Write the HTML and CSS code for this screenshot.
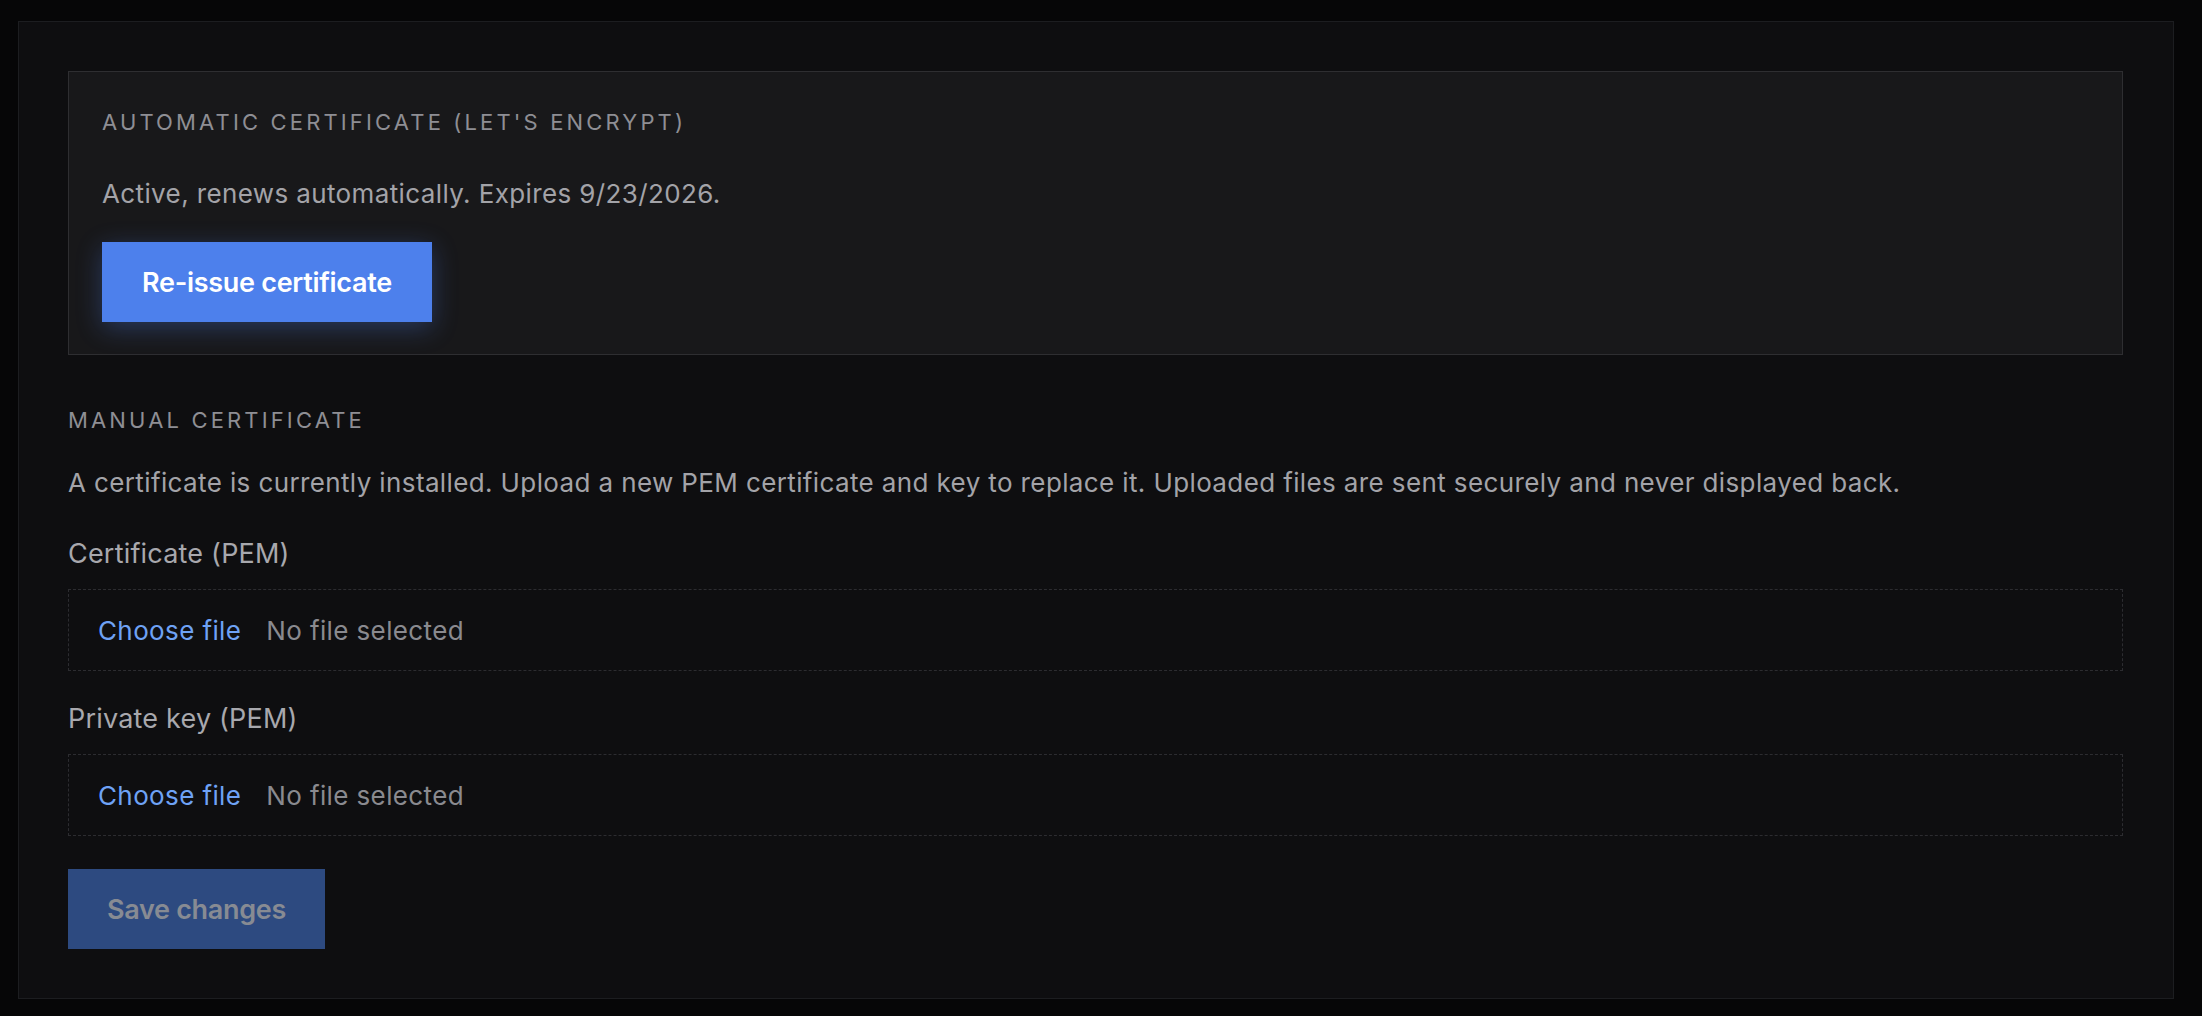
FILE: index.html
```html
<!DOCTYPE html>
<html lang="en">
<head>
<meta charset="utf-8">
<title>Certificate settings</title>
<link rel="stylesheet" href="styles.css">
</head>
<body>
  <section class="panel">
    <div class="auto-box">
      <h2 class="section-title">Automatic certificate (Let's Encrypt)</h2>
      <p class="status">Active, renews automatically. Expires 9/23/2026.</p>
      <button class="btn btn-primary" type="button">Re-issue certificate</button>
    </div>

    <h2 class="section-title manual-title">Manual certificate</h2>
    <p class="desc">A certificate is currently installed. Upload a new PEM certificate and key to replace it. Uploaded files are sent securely and never displayed back.</p>

    <label class="field-label first">Certificate (PEM)</label>
    <div class="file-box">
      <span class="choose">Choose file</span>
      <span class="no-file">No file selected</span>
    </div>

    <label class="field-label">Private key (PEM)</label>
    <div class="file-box">
      <span class="choose">Choose file</span>
      <span class="no-file">No file selected</span>
    </div>

    <button class="btn btn-save" type="button" disabled>Save changes</button>
  </section>
</body>
</html>
```
FILE: styles.css
```css
* { box-sizing: border-box; }

html, body {
  margin: 0;
  padding: 0;
  background: #060607;
  height: 100%;
}

body {
  font-family: "Inter", "Noto Sans", sans-serif;
  font-size: 26px;
  line-height: 39px;
  letter-spacing: 0.38px;
  color: #a3a3a8;
  padding: 21px 28px 18px 18px;
}

.panel {
  background: #0e0e10;
  border: 1px solid #1c1d20;
  padding: 49px 50px 49px 49px;
  display: flex;
  flex-direction: column;
  align-items: flex-start;
}

.auto-box {
  align-self: stretch;
  background: #18181a;
  border: 1px solid #2e2e31;
  padding: 34px 33px 32px 33px;
  display: flex;
  flex-direction: column;
  align-items: flex-start;
}

.section-title {
  margin: 0;
  font-size: 22px;
  line-height: 33px;
  font-weight: 400;
  text-transform: uppercase;
  letter-spacing: 3.15px;
  color: #8e8e94;
}

.status {
  margin: 35px 0 0;
  color: #a3a3a8;
}

.btn {
  font-family: "Inter", "Noto Sans", sans-serif;
  border: none;
  height: 80px;
  display: flex;
  align-items: center;
  justify-content: center;
  font-size: 27px;
  font-weight: 600;
  letter-spacing: -0.3px;
  border-radius: 0;
  cursor: pointer;
}

.btn-primary {
  margin-top: 29px;
  width: 330px;
  background: #4d80ec;
  color: #ffffff;
  box-shadow: 0 6px 26px rgba(77, 128, 236, 0.32);
}

.manual-title {
  margin-top: 49px;
}

.desc {
  margin: 26px 0 0;
  color: #a3a3a8;
}

.field-label {
  display: block;
  margin-top: 28px;
  font-size: 27px;
  letter-spacing: 0.2px;
  color: #a8a8ad;
}

.field-label.first {
  margin-top: 32px;
}

.file-box {
  align-self: stretch;
  margin-top: 16px;
  height: 82px;
  border: 1px dashed #2c2c30;
  display: flex;
  align-items: center;
  padding-left: 29px;
  gap: 25px;
}

.choose {
  color: #6ea2f5;
}

.no-file {
  color: #8a8a8f;
}

.btn-save {
  margin-top: 33px;
  width: 257px;
  background: #2d4a80;
  color: #878b93;
  cursor: default;
}
```
